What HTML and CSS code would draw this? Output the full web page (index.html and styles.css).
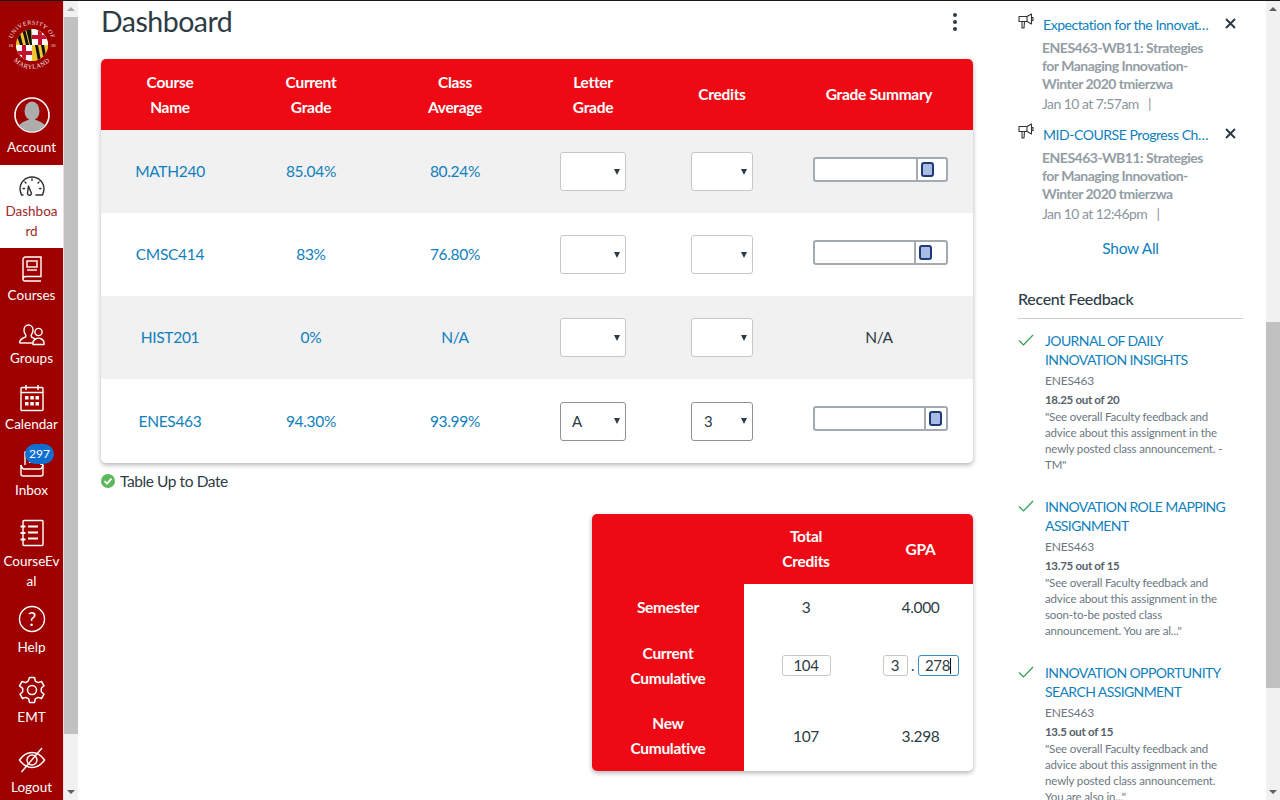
FILE: index.html
```html
<!DOCTYPE html>
<html lang="en">
<head>
<meta charset="utf-8">
<title>Dashboard</title>
<link rel="stylesheet" href="styles.css">
</head>
<body>
<div class="app">
  <nav class="sidebar">
    <div class="brand">
      <svg class="seal" viewBox="0 0 50 50" width="50" height="50">
        <defs>
          <path id="sealTop" d="M4.500 25a20.500 20.500 0 0 1 41 0"/>
          <path id="sealBottom" d="M1 25a24 24 0 0 0 48 0"/>
          <clipPath id="sealClip"><circle cx="25" cy="25" r="16"/></clipPath>
        </defs>
        <text class="seal-text"><textPath href="#sealTop" startOffset="50%" text-anchor="middle">UNIVERSITY OF</textPath></text>
        <text class="seal-text seal-text-b"><textPath href="#sealBottom" startOffset="50%" text-anchor="middle">MARYLAND</textPath></text>
        <text class="seal-year" x="1.500" y="27">18</text>
        <text class="seal-year" x="44" y="27">56</text>
        <g clip-path="url(#sealClip)">
          <rect x="9" y="9" width="32" height="32" fill="#f4c430"/>
          <path d="M12 9l4 16h-3l-4-12zM18 9l4 16h-3l-4-16zM24 9l1 16h-2l-4-16z" fill="#111"/>
          <rect x="25" y="9" width="16" height="16" fill="#fff"/>
          <path d="M31 9h4v6h6v4h-6v6h-4v-6h-6v-4h6z" fill="#c8102e"/>
          <rect x="9" y="25" width="16" height="16" fill="#fff"/>
          <path d="M15 25h4v6h6v4h-6v6h-4v-6H9v-4h6z" fill="#c8102e"/>
          <rect x="25" y="25" width="16" height="16" fill="#f4c430"/>
          <path d="M28 25l3 16h3l-3-16zM34 25l3 16h3l-3-16z" fill="#111"/>
        </g>
      </svg>
      <svg class="avatar" viewBox="0 0 36 36" width="36" height="36">
        <defs><clipPath id="avatarClip"><circle cx="18" cy="18" r="16.500"/></clipPath></defs>
        <circle cx="18" cy="18" r="17" fill="#9e0000" stroke="#fff" stroke-width="1.600"/>
        <g clip-path="url(#avatarClip)" fill="#adadad">
          <ellipse cx="18" cy="14" rx="7.500" ry="9.500"/>
          <path d="M3 34c0-7 6-9 11-11h8c5 2 11 4 11 11v3H3z"/>
        </g>
      </svg>
      <span class="nav-label">Account</span>
    </div>

    <a class="nav-item nav-dashboard">
      <svg class="nav-icon" viewBox="0 0 28 28" width="28" height="28" fill="none" stroke="#2d2d2d" stroke-width="1.400" stroke-linecap="round" stroke-linejoin="round">
        <path d="M5 23h-1.500C2.700 21 2 19 2 17a12 12 0 0 1 24 0c0 2-.7 4-1.500 6H18"/>
        <path d="M10.500 14l3 7.500a2 2 0 0 1-3 1.500 2 2 0 0 1-1-2z"/>
        <path d="M14 7v1.500M7 10l1 1M21 10l-1 1M5 16.500h1.500M21.500 16.500H23"/>
      </svg>
      <span class="nav-label">Dashboa<br>rd</span>
    </a>

    <a class="nav-item nav-courses">
      <svg class="nav-icon" viewBox="0 0 28 28" width="28" height="28" fill="none" stroke="#fff" stroke-width="1.400">
        <path d="M5 24V4.500A2.500 2.500 0 0 1 7.500 2H23v19.500H7.500A2.500 2.500 0 0 0 5 24a2 2 0 0 0 2 2h16"/>
        <rect x="9" y="6" width="10" height="6"/>
        <path d="M9 15h10"/>
      </svg>
      <span class="nav-label">Courses</span>
    </a>

    <a class="nav-item nav-groups">
      <svg class="nav-icon" viewBox="0 0 28 28" width="28" height="28" fill="none" stroke="#fff" stroke-width="1.400" stroke-linejoin="round">
        <path d="M1.500 23c0-3 2-4.500 6-6 .5-1 .5-2 0-2.500-1-1-1.500-2.500-1.500-4.500 0-3 2-5 4.500-5s4.500 2 4.500 5c0 2-.5 3.500-1.500 4.500-.5.500-.5 1.500 0 2.500 2 1 3.500 1.500 4 2.500"/>
        <path d="M1.500 23H15"/>
        <circle cx="20.500" cy="12" r="3.600"/>
        <path d="M15 24.500v-2c0-2 1.500-3 3.500-4 .5-.5 3.500-.5 4 0 2 1 3.500 2 3.500 4v2z"/>
      </svg>
      <span class="nav-label">Groups</span>
    </a>

    <a class="nav-item nav-calendar">
      <svg class="nav-icon" viewBox="0 0 28 28" width="28" height="28" fill="none" stroke="#fff" stroke-width="1.400">
        <rect x="3" y="3.500" width="22" height="23" rx="1"/>
        <path d="M3 8.500h22M8 1v5M20 1v5"/>
        <path class="fill-white" d="M7 12h3.500v3.500H7zM12.300 12h3.500v3.500h-3.500zM17.500 12H21v3.500h-3.500zM7 18h3.500v3.500H7zM12.300 18h3.500v3.500h-3.500zM17.500 18H21v3.500h-3.500z"/>
      </svg>
      <span class="nav-label">Calendar</span>
    </a>

    <a class="nav-item nav-inbox">
      <svg class="nav-icon" viewBox="0 0 28 28" width="28" height="28" fill="none" stroke="#fff" stroke-width="1.400" stroke-linejoin="round">
        <path d="M7 15V2h16v13"/>
        <path d="M3 15v9a2 2 0 0 0 2 2h18a2 2 0 0 0 2-2v-9l-3-2"/>
        <path d="M3 15c0 0 1 4 3 4h16c2 0 3-4 3-4"/>
        <path d="M11 12h8" stroke-width="2"/>
      </svg>
      <span class="badge">297</span>
      <span class="nav-label">Inbox</span>
    </a>

    <a class="nav-item nav-eval">
      <svg class="nav-icon" viewBox="0 0 28 28" width="28" height="28" fill="none" stroke="#fff" stroke-width="1.400">
        <rect x="5" y="1.500" width="20" height="25" rx="1"/>
        <path d="M10 7.500h10M10 13.500h10M10 19.500h10" stroke-width="1.800"/>
        <path d="M2.500 7.500h5M2.500 14h5M2.500 20.500h5" stroke-width="2.200"/>
      </svg>
      <span class="nav-label">CourseEv<br>al</span>
    </a>

    <a class="nav-item nav-help">
      <svg class="nav-icon" viewBox="0 0 28 28" width="28" height="28" fill="none" stroke="#fff" stroke-width="1.400">
        <circle cx="14" cy="14" r="12.500"/>
        <text class="help-mark" x="14" y="20.500" text-anchor="middle">?</text>
      </svg>
      <span class="nav-label">Help</span>
    </a>

    <a class="nav-item nav-emt">
      <svg class="nav-icon" viewBox="0 0 28 28" width="28" height="28" fill="none" stroke="#fff" stroke-width="1.500" stroke-linejoin="round">
        <path d="M11.500 1.500h5l.8 3.600 2.700 1.500 3.500-1.100 2.500 4.300-2.700 2.500v3.400l2.700 2.500-2.500 4.300-3.500-1.100-2.700 1.500-.8 3.600h-5l-.8-3.600-2.700-1.500-3.500 1.100-2.500-4.300 2.700-2.500v-3.400L1.500 9.800 4 5.500l3.500 1.100 2.700-1.500z"/>
        <circle cx="14" cy="14" r="4.500"/>
      </svg>
      <span class="nav-label">EMT</span>
    </a>

    <a class="nav-item nav-logout">
      <svg class="nav-icon" viewBox="0 0 28 28" width="28" height="28" fill="none" stroke="#fff" stroke-width="1.400">
        <path d="M1.500 14C5 9 9.500 6.500 14 6.500S23 9 26.500 14C23 19 18.500 21.500 14 21.500S5 19 1.500 14z"/>
        <circle cx="14" cy="14" r="5"/>
        <path d="M24 2L3.500 26"/>
      </svg>
      <span class="nav-label">Logout</span>
    </a>
  </nav>

  <div class="scrollbar scrollbar-nav">
    <span class="arrow-up"></span>
    <div class="thumb thumb-nav"></div>
    <div class="track-rest"><span class="arrow-down"></span></div>
  </div>

  <main class="main">
    <header class="title-row">
      <h1 class="title">Dashboard</h1>
      <div class="kebab"><i></i><i></i><i></i></div>
    </header>

    <section class="grades card">
      <div class="grades-row grades-head">
        <div>Course<br>Name</div>
        <div>Current<br>Grade</div>
        <div>Class<br>Average</div>
        <div>Letter<br>Grade</div>
        <div>Credits</div>
        <div>Grade Summary</div>
      </div>
      <div class="grades-row alt">
        <div><a class="link">MATH240</a></div>
        <div><a class="link">85.04%</a></div>
        <div><a class="link">80.24%</a></div>
        <div><div class="select select-letter"><span></span><b class="caret"></b></div></div>
        <div><div class="select select-credit"><span></span><b class="caret"></b></div></div>
        <div><div class="range"><div class="range-fill" style="width:103px"></div><div class="range-handle"></div></div></div>
      </div>
      <div class="grades-row">
        <div><a class="link">CMSC414</a></div>
        <div><a class="link">83%</a></div>
        <div><a class="link">76.80%</a></div>
        <div><div class="select select-letter"><span></span><b class="caret"></b></div></div>
        <div><div class="select select-credit"><span></span><b class="caret"></b></div></div>
        <div><div class="range"><div class="range-fill" style="width:101px"></div><div class="range-handle"></div></div></div>
      </div>
      <div class="grades-row alt">
        <div><a class="link">HIST201</a></div>
        <div><a class="link">0%</a></div>
        <div><a class="link">N/A</a></div>
        <div><div class="select select-letter"><span></span><b class="caret"></b></div></div>
        <div><div class="select select-credit"><span></span><b class="caret"></b></div></div>
        <div><span class="plain">N/A</span></div>
      </div>
      <div class="grades-row">
        <div><a class="link">ENES463</a></div>
        <div><a class="link">94.30%</a></div>
        <div><a class="link">93.99%</a></div>
        <div><div class="select select-letter"><span>A</span><b class="caret"></b></div></div>
        <div><div class="select select-credit"><span>3</span><b class="caret"></b></div></div>
        <div><div class="range"><div class="range-fill" style="width:111px"></div><div class="range-handle"></div></div></div>
      </div>
    </section>

    <div class="status">
      <svg viewBox="0 0 14 14" width="14" height="14"><circle cx="7" cy="7" r="7" fill="#5cb85c"/><path d="M3.500 7.200l2.500 2.500 4.500-5" fill="none" stroke="#fff" stroke-width="1.800"/></svg>
      <span>Table Up to Date</span>
    </div>

    <section class="gpa card">
      <div class="gpa-side gpa-corner"></div>
      <div class="gpa-head">Total<br>Credits</div>
      <div class="gpa-head">GPA</div>
      <div class="gpa-side">Semester</div>
      <div class="gpa-cell">3</div>
      <div class="gpa-cell">4.000</div>
      <div class="gpa-side">Current<br>Cumulative</div>
      <div class="gpa-fields"><div class="field field-credits">104</div></div>
      <div class="gpa-fields"><div class="field field-int">3</div><span class="dot">.</span><div class="field field-dec">278<i class="text-caret"></i></div></div>
      <div class="gpa-side">New<br>Cumulative</div>
      <div class="gpa-cell">107</div>
      <div class="gpa-cell">3.298</div>
    </section>
  </main>

  <aside class="aside">
    <article class="notice">
      <div class="notice-head">
        <svg class="megaphone" viewBox="0 0 16 16" width="16" height="16" fill="none" stroke="#333" stroke-width="1.100" stroke-linejoin="round"><path d="M1 3.500h8v5H1zM9 3.500l4.500-2.500v10L9 8.500M4 8.500v6.500h2l.5-6.500M13.500 4.500h1.500v3h-1.500"/></svg>
        <a class="notice-title">Expectation for the Innovat…</a>
        <svg class="close" viewBox="0 0 11 11" width="11" height="11" fill="none" stroke="#2d3b45" stroke-width="2"><path d="M1 1l9 9M10 1l-9 9"/></svg>
      </div>
      <p class="notice-course">ENES463-WB11: Strategies for Managing Innovation-Winter 2020 tmierzwa</p>
      <p class="notice-date">Jan 10 at 7:57am &nbsp; |</p>
    </article>
    <article class="notice">
      <div class="notice-head">
        <svg class="megaphone" viewBox="0 0 16 16" width="16" height="16" fill="none" stroke="#333" stroke-width="1.100" stroke-linejoin="round"><path d="M1 3.500h8v5H1zM9 3.500l4.500-2.500v10L9 8.500M4 8.500v6.500h2l.5-6.500M13.500 4.500h1.500v3h-1.500"/></svg>
        <a class="notice-title">MID-COURSE Progress Ch…</a>
        <svg class="close" viewBox="0 0 11 11" width="11" height="11" fill="none" stroke="#2d3b45" stroke-width="2"><path d="M1 1l9 9M10 1l-9 9"/></svg>
      </div>
      <p class="notice-course">ENES463-WB11: Strategies for Managing Innovation-Winter 2020 tmierzwa</p>
      <p class="notice-date">Jan 10 at 12:46pm &nbsp; |</p>
    </article>
    <a class="show-all">Show All</a>
    <h2 class="feedback-title">Recent Feedback</h2>

    <article class="feedback">
      <svg class="check" viewBox="0 0 16 12" width="16" height="12" fill="none" stroke="#2e9e4f" stroke-width="1.200"><path d="M1 6.500l4.500 4.500L15 1"/></svg>
      <div class="feedback-body">
        <a class="feedback-link">JOURNAL OF DAILY INNOVATION INSIGHTS</a>
        <div class="feedback-course">ENES463</div>
        <div class="feedback-score">18.25 out of 20</div>
        <p class="feedback-text">"See overall Faculty feedback and advice about this assignment in the newly posted class announcement. - TM"</p>
      </div>
    </article>
    <article class="feedback">
      <svg class="check" viewBox="0 0 16 12" width="16" height="12" fill="none" stroke="#2e9e4f" stroke-width="1.200"><path d="M1 6.500l4.500 4.500L15 1"/></svg>
      <div class="feedback-body">
        <a class="feedback-link">INNOVATION ROLE MAPPING ASSIGNMENT</a>
        <div class="feedback-course">ENES463</div>
        <div class="feedback-score">13.75 out of 15</div>
        <p class="feedback-text">"See overall Faculty feedback and advice about this assignment in the soon-to-be posted class announcement. You are al..."</p>
      </div>
    </article>
    <article class="feedback">
      <svg class="check" viewBox="0 0 16 12" width="16" height="12" fill="none" stroke="#2e9e4f" stroke-width="1.200"><path d="M1 6.500l4.500 4.500L15 1"/></svg>
      <div class="feedback-body">
        <a class="feedback-link">INNOVATION OPPORTUNITY SEARCH ASSIGNMENT</a>
        <div class="feedback-course">ENES463</div>
        <div class="feedback-score">13.5 out of 15</div>
        <p class="feedback-text">"See overall Faculty feedback and advice about this assignment in the newly posted class announcement. You are also in..."</p>
      </div>
    </article>
  </aside>

  <div class="scrollbar scrollbar-page">
    <span class="arrow-up"></span>
    <div class="track-gap"></div>
    <div class="thumb thumb-page"></div>
    <div class="track-rest"><span class="arrow-down"></span></div>
  </div>
</div>
</body>
</html>
```
FILE: styles.css
```css
* { box-sizing: border-box; }
html, body { margin: 0; height: 100%; overflow: hidden; }
body {
  font-family: Lato, "Open Sans", sans-serif;
  font-size: 15.5px;
  letter-spacing: -.3px;
  color: #2d3b45;
  background: #fff;
  border-top: 1px solid #1a1a1a;
}
p, h1, h2 { margin: 0; }
.app { display: flex; height: 799px; overflow: hidden; }

/* Global nav */
.sidebar {
  flex: 0 0 64px;
  width: 64px;
  background: #9e0000;
  border-right: 1px solid #f3dede;
  color: #fff;
  height: 799px;
  overflow: hidden;
  letter-spacing: 0;
}
.brand { height: 164px; display: flex; flex-direction: column; align-items: center; padding-top: 19px; }
.seal { display: block; width: 50px; height: 50px; flex: none; overflow: visible; }
.seal-text { font: 6px "Liberation Serif", serif; fill: #f6e6e6; letter-spacing: .5px; }
.seal-text-b { font-size: 6.5px; }
.seal-year { font: 4.500px "Liberation Serif", serif; fill: #f6e6e6; }
.avatar { display: block; margin-top: 27px; flex: none; }
.brand .nav-label { margin-top: 4px; }
.nav-item { display: flex; flex-direction: column; align-items: center; position: relative; color: #fff; }
.nav-icon { display: block; flex: none; }
.nav-label {
  display: block;
  width: 100%;
  font-size: 13.5px;
  line-height: 20px;
  text-align: center;
  white-space: nowrap;
}
.fill-white { fill: #fff; stroke: none; }
.help-mark { font: 400 19px Lato, sans-serif; fill: #fff; stroke: none; }
.nav-dashboard { background: #fff; color: #9e2a2a; height: 83px; padding-top: 7px; }
.nav-dashboard .nav-label { margin-top: 1px; }
.nav-courses { padding-top: 7px; }
.nav-courses .nav-label { margin-top: 2px; }
.nav-groups { padding-top: 15px; }
.nav-calendar { padding-top: 16px; }
.nav-calendar .nav-label { margin-top: 2px; }
.nav-inbox { padding-top: 16px; }
.nav-inbox .nav-label { margin-top: 2px; }
.nav-eval { padding-top: 19px; }
.nav-eval .nav-label { margin-top: 4px; }
.nav-help { padding-top: 14px; }
.nav-help .nav-label { margin-top: 4px; }
.nav-emt { padding-top: 19px; }
.nav-emt .nav-label { margin-top: 3px; }
.nav-logout { padding-top: 19px; }
.nav-logout .nav-label { margin-top: 3px; }
.badge {
  position: absolute;
  top: 10px;
  left: 25px;
  width: 29px;
  height: 20px;
  border-radius: 10px;
  background: #0f6fd0;
  color: #fff;
  font-size: 12px;
  line-height: 20px;
  text-align: center;
}

/* Scrollbars */
.scrollbar {
  flex: 0 0 14px;
  width: 14px;
  display: flex;
  flex-direction: column;
  background: #f1f1f1;
  height: 799px;
}
.arrow-up {
  flex: none;
  display: block;
  height: 16px;
  padding-top: 6px;
}
.arrow-up::before, .arrow-down::before {
  content: "";
  display: block;
  width: 0;
  margin: 0 auto;
  border-left: 4px solid transparent;
  border-right: 4px solid transparent;
}
.arrow-up::before { border-bottom: 4px solid #5f5f5f; }
.arrow-down { display: block; margin-top: auto; padding-bottom: 6px; }
.arrow-down::before { border-top: 4px solid #5f5f5f; }
.scrollbar-nav .arrow-up::before { border-bottom-color: #a8a8a8; }
.thumb { flex: none; background: #c1c1c1; }
.thumb-nav { height: 717px; }
.track-gap { flex: none; height: 305px; }
.thumb-page { height: 366px; }
.track-rest { flex: 1; display: flex; flex-direction: column; }

/* Main */
.main { flex: 0 0 940px; width: 940px; padding: 0 45px 0 23px; }
.title-row { display: flex; justify-content: space-between; align-items: center; height: 42px; padding-right: 16px; }
.title { font-size: 28.5px; font-weight: 400; letter-spacing: -.5px; line-height: 40px; margin-bottom: 2px; color: #2d3b45; }
.kebab { display: flex; flex-direction: column; gap: 3px; align-items: center; }
.kebab i { display: block; width: 4px; height: 4px; border-radius: 50%; background: #2d3b45; }
.card { background: #fff; border-radius: 5px; box-shadow: 0 2px 5px rgba(0,0,0,.3); }

.grades { margin-top: 16px; width: 872px; overflow: hidden; }
.grades-row {
  display: grid;
  grid-template-columns: 138px 144px 144px 132px 126px 188px;
  height: 83px;
  align-items: center;
  text-align: center;
  line-height: 25px;
}
.grades-row:last-child { height: 84px; }
.grades-row > div { display: flex; justify-content: center; align-items: center; }
.grades-head {
  height: 71px;
  background: #ee0a14;
  color: #fff;
  font-weight: 700;
}
.grades-head > div { display: block; }
.alt { background: #f1f1f2; }
.link { color: #0f7fbd; }

.select {
  height: 39px;
  display: flex;
  justify-content: space-between;
  align-items: center;
  background: #fff;
  border: 1px solid #c4c8cc;
  border-radius: 3px;
  padding: 0 5px 0 12px;
  font-size: 15px;
  color: #2d3b45;
}
.select-letter { width: 66px; padding-left: 11px; }
.select-credit { width: 62px; }
.caret {
  display: block;
  width: 0;
  height: 0;
  border-left: 3px solid transparent;
  border-right: 3px solid transparent;
  border-top: 6px solid #2d3b45;
}
.grades-row:last-child .select { border-color: #8c949a; }

.range {
  width: 135px;
  height: 25px;
  margin: 0 0 5px 2px;
  display: flex;
  align-items: center;
  border: 2px solid #a3abb1;
  border-radius: 3px;
  background: #fff;
}
.range-fill { height: 100%; border-right: 2px solid #a3abb1; flex: none; }
.range-handle {
  flex: none;
  width: 13px;
  height: 15px;
  margin-left: 3px;
  background: #a9bce4;
  border: 2px solid #1f3a78;
  border-radius: 3px;
}

.status { display: flex; align-items: center; gap: 5px; margin-top: 8px; line-height: 20px; height: 20px; letter-spacing: -.42px; }

.gpa {
  margin: 23px 0 0 491px;
  width: 381px;
  display: grid;
  grid-template-columns: 152px 124px 105px;
  grid-template-rows: 70px 46px 71px 70px;
  overflow: hidden;
  text-align: center;
  line-height: 25px;
}
.gpa-head, .gpa-side {
  background: #ee0a14;
  color: #fff;
  font-weight: 700;
  display: flex;
  align-items: center;
  justify-content: center;
}
.gpa-cell { display: flex; align-items: center; justify-content: center; }
.gpa-fields { display: flex; align-items: center; justify-content: center; }
.field {
  height: 21px;
  border: 1px solid #c4c8cc;
  border-radius: 3px;
  font-size: 15px;
  line-height: 19px;
  text-align: center;
}
.field-credits { width: 49px; }
.field-int { width: 25px; }
.dot { width: 10px; line-height: 21px; font-size: 15px; }
.field-dec { width: 41px; border-color: #3b8dbd; }
.text-caret { display: inline-block; width: 1px; height: 16px; background: #111; vertical-align: -3px; }

/* Right column */
.aside { flex: 0 0 248px; width: 248px; padding: 15px 23px 0 0; overflow: hidden; height: 799px; }
.notice { margin-bottom: 12px; }
.notice-head { display: flex; align-items: flex-start; height: 19px; }
.megaphone { flex: none; margin-top: -3px; }
.notice-title {
  flex: none;
  width: 168px;
  margin: -1px 0 0 9px;
  font-size: 14px;
  letter-spacing: -.45px;
  line-height: 19px;
  color: #0f7fbd;
  white-space: nowrap;
}
.close { flex: none; margin: 2px 0 0 14px; }
.notice-course {
  margin: 4px 0 0 24px;
  width: 175px;
  font-size: 14px;
  font-weight: 700;
  letter-spacing: -.5px;
  line-height: 18px;
  color: #939da4;
}
.notice-date { margin: 1px 0 0 24px; font-size: 14px; letter-spacing: -.55px; line-height: 20px; color: #8b969e; }
.show-all { display: block; margin: 13px 0 0 0; text-align: center; width: 225px; line-height: 22px; color: #0f7fbd; }
.feedback-title {
  margin-top: 29px;
  padding-bottom: 8px;
  border-bottom: 1px solid #c7cdd1;
  font-size: 16px;
  font-weight: 500;
  letter-spacing: -.3px;
  line-height: 22px;
  color: #2d3b45;
}
.feedback { display: flex; margin-top: 12px; margin-bottom: 24px; }
.feedback + .feedback { margin-top: 0; }
.check { flex: none; margin-top: 3px; }
.feedback-body { margin-left: 11px; width: 198px; }
.feedback-link { display: block; font-size: 14px; letter-spacing: -.6px; line-height: 19px; color: #0f7fbd; }
.feedback-course { margin-top: 3px; font-size: 12px; letter-spacing: -.2px; line-height: 18px; color: #6b7780; }
.feedback-score { font-size: 11.5px; letter-spacing: -.3px; line-height: 19px; font-weight: 700; color: #56626b; }
.feedback-text { width: 179px; font-size: 11.5px; letter-spacing: -.15px; line-height: 16px; color: #6b7780; }
```
